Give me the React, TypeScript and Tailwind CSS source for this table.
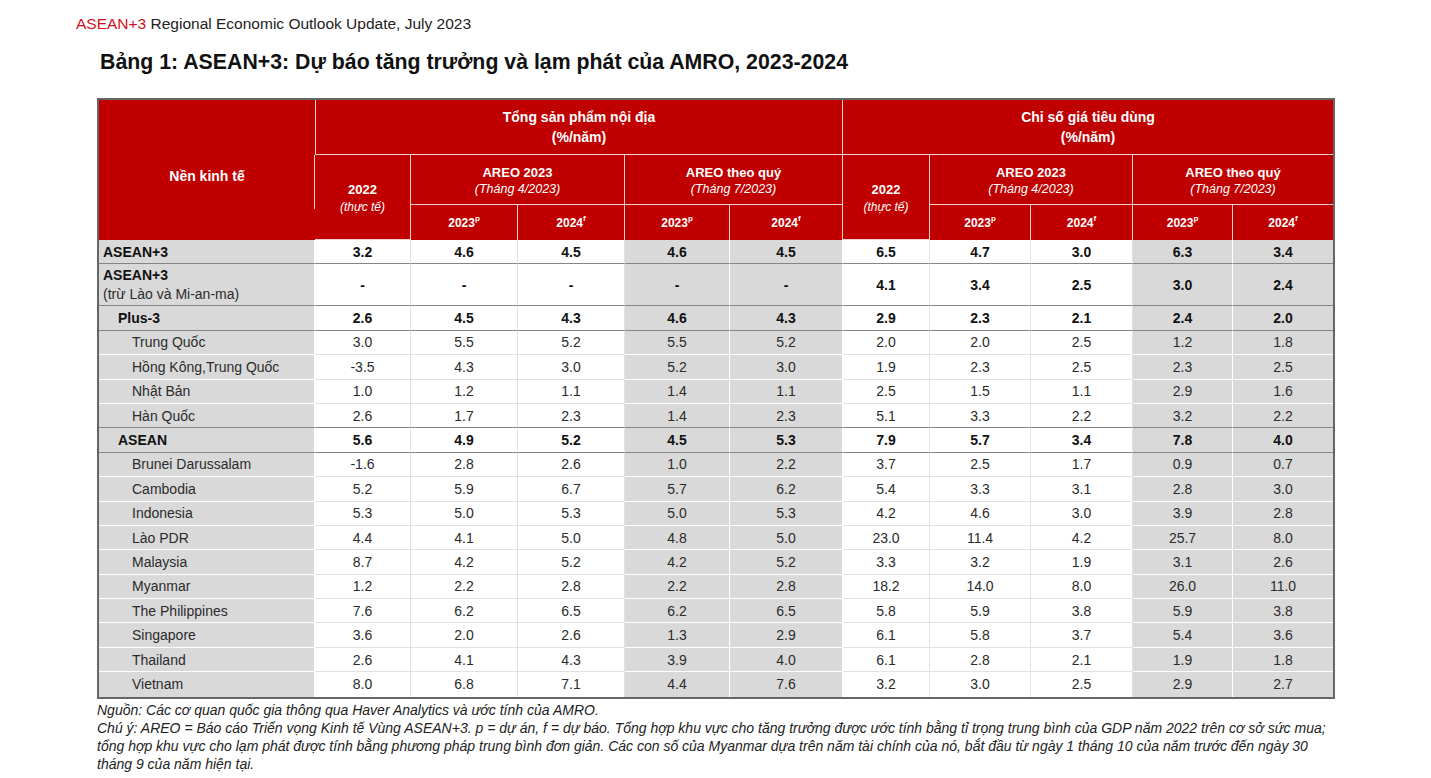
import React from 'react';

type Row = {
  label: string;
  sub?: string;
  level: 0 | 1 | 2;
  bold?: boolean;
  dark?: boolean;
  gdp: string[];
  cpi: string[];
};

const rows: Row[] = [
  { label: 'ASEAN+3', level: 0, bold: true, dark: true, gdp: ['3.2', '4.6', '4.5', '4.6', '4.5'], cpi: ['6.5', '4.7', '3.0', '6.3', '3.4'] },
  { label: 'ASEAN+3', sub: '(trừ Lào và Mi-an-ma)', level: 0, bold: true, dark: true, gdp: ['-', '-', '-', '-', '-'], cpi: ['4.1', '3.4', '2.5', '3.0', '2.4'] },
  { label: 'Plus-3', level: 1, bold: true, dark: true, gdp: ['2.6', '4.5', '4.3', '4.6', '4.3'], cpi: ['2.9', '2.3', '2.1', '2.4', '2.0'] },
  { label: 'Trung Quốc', level: 2, gdp: ['3.0', '5.5', '5.2', '5.5', '5.2'], cpi: ['2.0', '2.0', '2.5', '1.2', '1.8'] },
  { label: 'Hồng Kông,Trung Quốc', level: 2, gdp: ['-3.5', '4.3', '3.0', '5.2', '3.0'], cpi: ['1.9', '2.3', '2.5', '2.3', '2.5'] },
  { label: 'Nhật Bản', level: 2, gdp: ['1.0', '1.2', '1.1', '1.4', '1.1'], cpi: ['2.5', '1.5', '1.1', '2.9', '1.6'] },
  { label: 'Hàn Quốc', level: 2, dark: true, gdp: ['2.6', '1.7', '2.3', '1.4', '2.3'], cpi: ['5.1', '3.3', '2.2', '3.2', '2.2'] },
  { label: 'ASEAN', level: 1, bold: true, dark: true, gdp: ['5.6', '4.9', '5.2', '4.5', '5.3'], cpi: ['7.9', '5.7', '3.4', '7.8', '4.0'] },
  { label: 'Brunei Darussalam', level: 2, gdp: ['-1.6', '2.8', '2.6', '1.0', '2.2'], cpi: ['3.7', '2.5', '1.7', '0.9', '0.7'] },
  { label: 'Cambodia', level: 2, gdp: ['5.2', '5.9', '6.7', '5.7', '6.2'], cpi: ['5.4', '3.3', '3.1', '2.8', '3.0'] },
  { label: 'Indonesia', level: 2, gdp: ['5.3', '5.0', '5.3', '5.0', '5.3'], cpi: ['4.2', '4.6', '3.0', '3.9', '2.8'] },
  { label: 'Lào PDR', level: 2, gdp: ['4.4', '4.1', '5.0', '4.8', '5.0'], cpi: ['23.0', '11.4', '4.2', '25.7', '8.0'] },
  { label: 'Malaysia', level: 2, gdp: ['8.7', '4.2', '5.2', '4.2', '5.2'], cpi: ['3.3', '3.2', '1.9', '3.1', '2.6'] },
  { label: 'Myanmar', level: 2, gdp: ['1.2', '2.2', '2.8', '2.2', '2.8'], cpi: ['18.2', '14.0', '8.0', '26.0', '11.0'] },
  { label: 'The Philippines', level: 2, gdp: ['7.6', '6.2', '6.5', '6.2', '6.5'], cpi: ['5.8', '5.9', '3.8', '5.9', '3.8'] },
  { label: 'Singapore', level: 2, gdp: ['3.6', '2.0', '2.6', '1.3', '2.9'], cpi: ['6.1', '5.8', '3.7', '5.4', '3.6'] },
  { label: 'Thailand', level: 2, gdp: ['2.6', '4.1', '4.3', '3.9', '4.0'], cpi: ['6.1', '2.8', '2.1', '1.9', '1.8'] },
  { label: 'Vietnam', level: 2, gdp: ['8.0', '6.8', '7.1', '4.4', '7.6'], cpi: ['3.2', '3.0', '2.5', '2.9', '2.7'] },
];

const colWidths = [216, 96, 107, 107, 105, 113, 87, 101, 102, 100, 100];

const hd = 'bg-[#c00000] text-white font-bold text-center align-middle border-b border-r border-[#efd3d3]';

function Year({ y, s }: { y: string; s: string }) {
  return (
    <span>
      {y}
      <span className="text-[8px] align-top relative top-[-1px]">{s}</span>
    </span>
  );
}

export default function App() {
  return (
    <div className="w-[1431px] h-[778px] overflow-hidden bg-white font-['Liberation_Sans',Arial,sans-serif] text-[#1c1c1c]">
      <p className="ml-[76px] pt-[15px] text-[15.5px] leading-[18px] text-[#222]">
        <span className="text-[#d0101c]">ASEAN+3</span> Regional Economic Outlook Update, July 2023
      </p>
      <h1 className="ml-[100px] mt-[17px] text-[21.3px] leading-[24px] font-bold text-[#111]">
        Bảng 1: ASEAN+3: Dự báo tăng trưởng và lạm phát của AMRO, 2023-2024
      </h1>

      <div className="ml-[97px] mt-[24px] w-[1238px] border-2 border-[#666]">
        <table className="w-[1234px] table-fixed border-separate border-spacing-0 text-[14px]">
          <colgroup>
            {colWidths.map((w, i) => (
              <col key={i} style={{ width: w }} />
            ))}
          </colgroup>
          <thead>
            <tr className="h-[55px]">
              <th rowSpan={3} className="bg-[#c00000] text-white font-bold text-center align-middle pt-[12px]">
                Nền kinh tế
              </th>
              <th colSpan={5} className={`${hd} border-l leading-[20px]`}>
                Tổng sản phẩm nội địa
                <br />
                (%/năm)
              </th>
              <th colSpan={5} className={`${hd} border-r-0 leading-[20px]`}>
                Chỉ số giá tiêu dùng
                <br />
                (%/năm)
              </th>
            </tr>
            <tr className="h-[50px] text-[13px]">
              <th rowSpan={2} className={`${hd} relative leading-[17px] pt-[2px]`}>
                <span className="absolute left-[-1px] top-0 h-[54px] w-px bg-[#efd3d3]" />
                2022
                <br />
                <span className="italic font-normal text-[12px]">(thực tế)</span>
              </th>
              <th colSpan={2} className={`${hd} leading-[16px] pt-[2px]`}>
                AREO 2023
                <br />
                <span className="italic font-normal text-[12.5px]">(Tháng 4/2023)</span>
              </th>
              <th colSpan={2} className={`${hd} leading-[16px] pt-[2px]`}>
                AREO theo quý
                <br />
                <span className="italic font-normal text-[12.5px]">(Tháng 7/2023)</span>
              </th>
              <th rowSpan={2} className={`${hd} leading-[17px] pt-[2px]`}>
                2022
                <br />
                <span className="italic font-normal text-[12px]">(thực tế)</span>
              </th>
              <th colSpan={2} className={`${hd} leading-[16px] pt-[2px]`}>
                AREO 2023
                <br />
                <span className="italic font-normal text-[12.5px]">(Tháng 4/2023)</span>
              </th>
              <th colSpan={2} className={`${hd} border-r-0 leading-[16px] pt-[2px]`}>
                AREO theo quý
                <br />
                <span className="italic font-normal text-[12.5px]">(Tháng 7/2023)</span>
              </th>
            </tr>
            <tr className="h-[35px] text-[12px]">
              {[0, 1, 2, 3, 4, 5, 6, 7].map((i) => (
                <th key={i} className={`${hd} border-b-0 ${i === 7 ? 'border-r-0' : ''}`}>
                  {i % 2 === 0 ? <Year y="2023" s="p" /> : <Year y="2024" s="f" />}
                </th>
              ))}
            </tr>
          </thead>
          <tbody>
            {rows.map((r, ri) => {
              const last = ri === rows.length - 1;
              const bottom = last
                ? 'border-b-0'
                : r.dark
                  ? 'border-b border-b-[#858585]'
                  : 'border-b';
              const values = [...r.gdp, ...r.cpi];
              return (
                <tr key={ri} className={r.sub ? 'h-[42px]' : 'h-[24.4px]'}>
                  <td
                    className={`bg-[#d9d9d9] border-r border-white ${bottom} ${
                      r.dark ? '' : 'border-b-white'
                    } align-middle pt-[1px] ${
                      r.level === 0 ? 'pl-[4px]' : r.level === 1 ? 'pl-[19px]' : 'pl-[33px]'
                    } ${r.bold ? 'font-bold text-[#111]' : 'text-[#2b2b2b]'}`}
                  >
                    {r.sub ? (
                      <div className="leading-[19px]">
                        {r.label}
                        <br />
                        <span className="font-normal text-[#2b2b2b]">{r.sub}</span>
                      </div>
                    ) : (
                      r.label
                    )}
                  </td>
                  {values.map((v, vi) => {
                    const gray = vi % 5 >= 3;
                    return (
                      <td
                        key={vi}
                        className={`text-center align-middle pt-[1px] ${bottom} ${
                          vi === 9 ? '' : 'border-r'
                        } ${
                          gray
                            ? `bg-[#d9d9d9] border-white ${r.dark ? '' : 'border-b-white'}`
                            : `bg-white border-[#e2e2e2] ${r.dark ? '' : 'border-b-[#e2e2e2]'}`
                        } ${r.bold ? 'font-bold text-[#111]' : 'text-[#2b2b2b]'}`}
                      >
                        {v}
                      </td>
                    );
                  })}
                </tr>
              );
            })}
          </tbody>
        </table>
      </div>

      <div className="ml-[97px] mt-[2px] italic text-[14px] leading-[18px] text-[#222]">
        <p>Nguồn: Các cơ quan quốc gia thông qua Haver Analytics và ước tính của AMRO.</p>
        <p>
          Chú ý: AREO = Báo cáo Triển vọng Kinh tế Vùng ASEAN+3. p = dự án, f = dự báo. Tổng hợp khu vực cho tăng trưởng được ước tính bằng tỉ trọng trung bình của GDP năm 2022 trên cơ sở sức mua;
          <br />
          tổng hợp khu vực cho lạm phát được tính bằng phương pháp trung bình đơn giản. Các con số của Myanmar dựa trên năm tài chính của nó, bắt đầu từ ngày 1 tháng 10 của năm trước đến ngày 30
          <br />
          tháng 9 của năm hiện tại.
        </p>
      </div>
    </div>
  );
}
